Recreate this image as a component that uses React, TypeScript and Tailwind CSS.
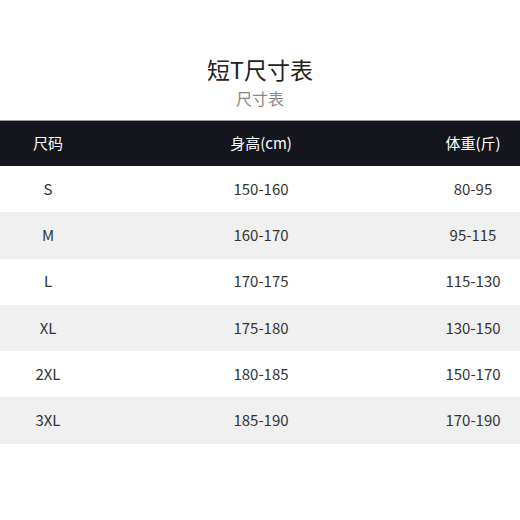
const rows = [
  ['S', '150-160', '80-95'],
  ['M', '160-170', '95-115'],
  ['L', '170-175', '115-130'],
  ['XL', '175-180', '130-150'],
  ['2XL', '180-185', '150-170'],
  ['3XL', '185-190', '170-190'],
];

export default function App() {
  return (
    <div
      className="w-[520px] h-[520px] bg-white text-[#333]"
      style={{ fontFamily: '"Noto Sans CJK SC", "Noto Sans", sans-serif' }}
    >
      {/* Title */}
      <div className="pt-[54px] flex flex-col items-center">
        <h1 className="text-[23px] leading-[30px] text-[#222]">短T尺寸表</h1>
        <p className="mt-[2px] text-[16px] leading-[24px] text-[#888]">尺寸表</p>
      </div>

      {/* Table */}
      <div className="mt-[10px]">
        <div className="grid grid-cols-[96px_1fr_94px] h-[46px] items-center bg-[#15151d] border-t border-[#9a9a9a] text-white text-[15px]">
          <div className="text-center">尺码</div>
          <div className="text-center">身高(cm)</div>
          <div className="text-center">体重(斤)</div>
        </div>
        {rows.map((r, i) => (
          <div
            key={r[0]}
            className={`grid grid-cols-[96px_1fr_94px] h-[46.3px] items-center text-[15px] ${
              i % 2 === 1 ? 'bg-[#f0f0f0]' : 'bg-white'
            }`}
          >
            <div className="text-center">{r[0]}</div>
            <div className="text-center">{r[1]}</div>
            <div className="text-center">{r[2]}</div>
          </div>
        ))}
      </div>
    </div>
  );
}
